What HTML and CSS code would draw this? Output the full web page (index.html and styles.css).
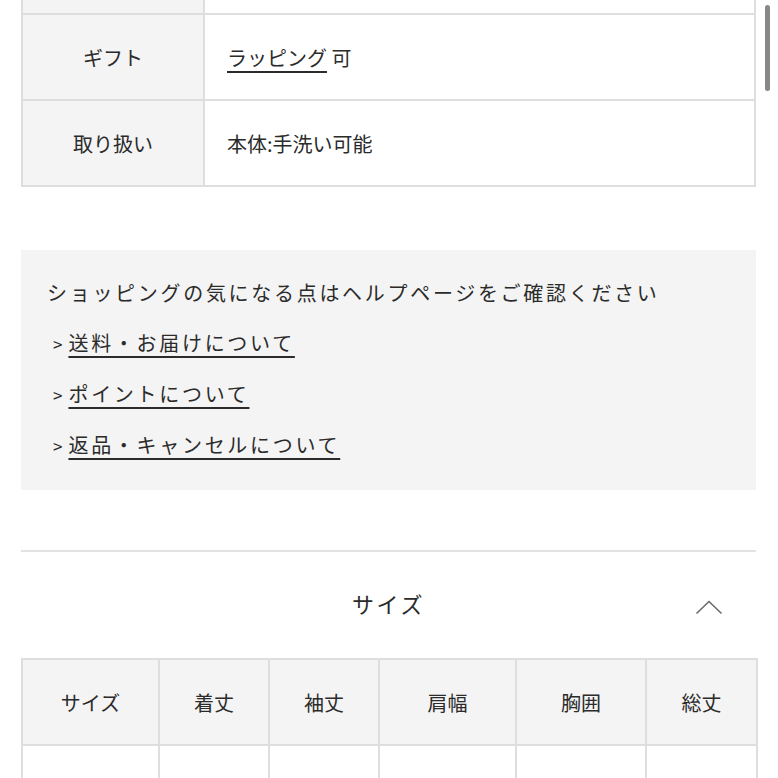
FILE: index.html
```html
<!DOCTYPE html>
<html lang="ja">
<head>
<meta charset="utf-8">
<link rel="stylesheet" href="styles.css">
</head>
<body>
<div class="page">
  <table class="spec">
    <tr><th></th><td></td></tr>
    <tr><th>ギフト</th><td><a class="ul" href="#">ラッピング</a> 可</td></tr>
    <tr><th>取り扱い</th><td>本体:手洗い可能</td></tr>
  </table>

  <div class="help">
    <p class="help-title">ショッピングの気になる点はヘルプページをご確認ください</p>
    <p class="help-link"><span class="gt">&gt;</span><a href="#">送料・お届けについて</a></p>
    <p class="help-link"><span class="gt">&gt;</span><a href="#">ポイントについて</a></p>
    <p class="help-link"><span class="gt">&gt;</span><a href="#">返品・キャンセルについて</a></p>
  </div>

  <div class="section">
    <div class="section-head">
      <span class="section-title">サイズ</span>
      <svg class="chev" width="28" height="16" viewBox="0 0 28 16"><path d="M1.5 14.5 L14 2.5 L26.5 14.5" fill="none" stroke="#6a6a6a" stroke-width="1.6"/></svg>
    </div>
    <table class="size">
      <colgroup>
        <col class="c1"><col class="c2"><col class="c3"><col class="c4"><col class="c5"><col class="c6">
      </colgroup>
      <tr><th>サイズ</th><th>着丈</th><th>袖丈</th><th>肩幅</th><th>胸囲</th><th>総丈</th></tr>
      <tr><td></td><td></td><td></td><td></td><td></td><td></td></tr>
    </table>
  </div>
</div>
<div class="scroll-thumb"></div>
</body>
</html>
```
FILE: styles.css
```css
html, body {
  margin: 0;
  padding: 0;
  background: #fff;
  overflow: hidden;
  height: 778px;
}
body {
  font-family: "Noto Sans CJK JP", "Noto Sans", sans-serif;
  font-size: 20px;
  color: #2b2b2b;
}
.page {
  width: 735px;
  padding-left: 21px;
}
.spec {
  width: 735px;
  border-collapse: collapse;
  margin-top: -73px;
}
.spec th, .spec td {
  border: 2px solid #dedede;
  height: 84px;
  padding: 0;
  font-weight: normal;
}
.spec th {
  width: 180px;
  background: #f4f4f4;
  text-align: center;
}
.spec td {
  padding-left: 22px;
  text-align: left;
}
a {
  color: #2b2b2b;
  text-decoration: underline;
  text-underline-offset: 5px;
  text-decoration-thickness: 2px;
}
.help {
  margin-top: 63px;
  background: #f4f4f4;
  padding: 18px 26px 19px;
}
.help p {
  margin: 0;
  line-height: 50px;
}
.help-title {
  letter-spacing: 2.7px;
}
.help-link {
  padding-left: 6px;
  letter-spacing: 2.7px;
}
.gt {
  font-size: 17px;
  letter-spacing: 0;
  margin-right: 6px;
}
.section {
  margin-top: 60px;
  border-top: 2px solid #e2e2e2;
}
.section-head {
  height: 106px;
  position: relative;
  display: flex;
  align-items: center;
  justify-content: center;
}
.section-title {
  font-size: 22px;
  letter-spacing: 2.5px;
  margin-top: -4px;
}
.chev {
  position: absolute;
  right: 33px;
  top: 47px;
}
.size {
  width: 735px;
  border-collapse: collapse;
  table-layout: fixed;
}
.size .c1 { width: 137px; }
.size .c2 { width: 110px; }
.size .c3 { width: 110px; }
.size .c4 { width: 137px; }
.size .c5 { width: 130px; }
.size .c6 { width: 111px; }
.size th, .size td {
  border: 2px solid #dedede;
  height: 84px;
  padding: 0;
  font-weight: normal;
  text-align: center;
}
.size th {
  background: #f4f4f4;
}
.scroll-thumb {
  position: fixed;
  right: 8px;
  top: 5px;
  width: 5px;
  height: 86px;
  background: #888;
  border-radius: 3px;
}
```
